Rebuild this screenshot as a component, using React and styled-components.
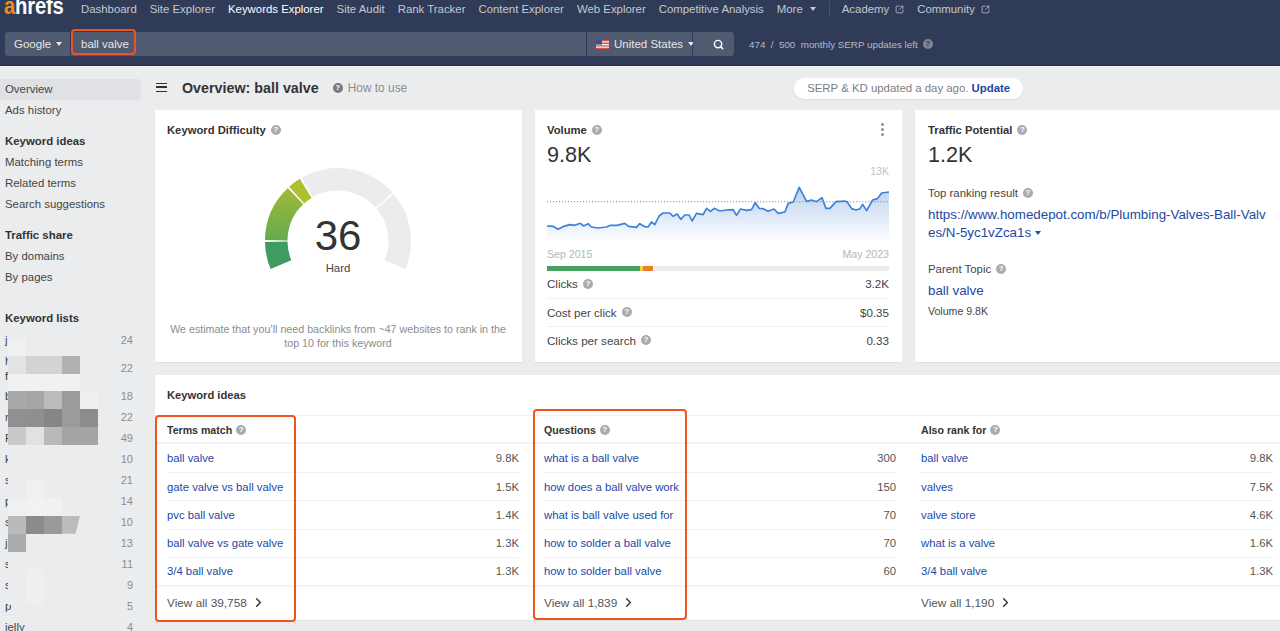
import React from "react";
import styled, { createGlobalStyle } from "styled-components";
import { Search, ChevronRight, SquareArrowOutUpRight } from "lucide-react";

const Global = createGlobalStyle`
  html, body { margin: 0; padding: 0; height: 631px; overflow: hidden; background: #ebecee; }
  * { box-sizing: border-box; }
  body { font-family: "Liberation Sans", Arial, sans-serif; font-size: 12px; color: #444; }
`;

const Page = styled.div`position: relative; width: 1280px; height: 631px; overflow: hidden;`;

const Header = styled.header`
  height: 66px; background: #303c57; border-bottom: 1px solid #1f2b46; box-shadow: 0 1px 0 #f7f7f8; position: relative;
`;
const NavRow = styled.nav`display: flex; align-items: center; height: 18px; padding-left: 4px; font-size: 11.4px; color: #c3c8d2; white-space: nowrap;`;
const Logo = styled.span`
  font-weight: 700; font-size: 23px; line-height: 18px; width: 77px; color: #fff; letter-spacing: -0.2px; position: relative; top: -3px;
  transform: scaleX(0.88); transform-origin: left center;
  b { color: #f08a24; font-weight: 700; }
`;
const NavItem = styled.a`
  color: ${p => (p.$active ? "#fff" : "#c3c8d2")}; margin-right: 13px; display: inline-flex; align-items: center; gap: 6px;
`;
const Caret = styled.i`
  display: inline-block; width: 0; height: 0; border-left: 3px solid transparent; border-right: 3px solid transparent;
  border-top: 4px solid ${p => p.$color || "currentColor"}; margin-left: ${p => p.$gap || 5}px; vertical-align: middle;
`;
const NavSep = styled.span`width: 1px; height: 16px; background: #465169; margin: 0 12px 0 0;`;
const SearchRow = styled.div`display: flex; align-items: center; height: 24px; margin-top: 14px; padding-left: 5px; color: #e4e6eb; font-size: 11.5px;`;
const Seg = styled.div`
  height: 24px; background: #505a70; display: flex; align-items: center; width: ${p => p.$w}px; margin-right: 1px;
  padding-left: ${p => p.$pl || 0}px; border-radius: ${p => p.$r || "0"}; white-space: nowrap;
`;
const Quota = styled.div`margin-left: 14px; font-size: 9.8px; color: #b4b9c4; display: flex; align-items: center; gap: 4px; white-space: pre;`;

const Help = styled.span.attrs({ children: "?" })`
  display: inline-flex; align-items: center; justify-content: center; width: 10px; height: 10px; border-radius: 50%;
  background: ${p => p.$bg || "#a9abae"}; color: ${p => p.$fg || "#fff"}; font-size: 8px; font-weight: 700; line-height: 10px; margin-left: ${p => p.$ml || 5}px; flex: none;
`;

const Body = styled.div`display: flex; height: 565px;`;

const Side = styled.aside`width: 155px; flex: none; padding-top: 13px; position: relative; color: #444; font-size: 11.4px; overflow: hidden;`;
const SideItem = styled.div`
  height: 21px; line-height: 21.5px; padding-left: 5px; width: 141px; border-radius: 0 3px 3px 0;
  background: ${p => (p.$active ? "#dfe1e5" : "transparent")}; margin-bottom: ${p => p.$mb || 0}px;
`;
const SideHead = styled.div`height: 21px; line-height: 21.5px; padding-left: 5px; font-weight: 700; color: #333; margin-top: ${p => p.$mt || 0}px;`;
const ListBody = styled.div`padding-top: 1px;`;
const ListRow = styled.div`
  display: flex; justify-content: space-between; align-items: center; width: 133px; padding-left: 5px;
  height: ${p => (p.$tall ? 35 : 21)}px; line-height: 15px;
  span:last-child { color: #8c8e92; font-size: 11px; }
`;
const Mosaic = styled.div`position: absolute; left: 8px; top: 272px; display: grid; grid-template-columns: repeat(5, 18px); grid-auto-rows: 17.8px;`;
const Cell = styled.div`
  background: ${p => p.$c || "#ebecee"};
  clip-path: ${p => (p.$skew ? "polygon(0 0, 100% 0, 75% 100%, 0 100%)" : "none")};
`;

const Main = styled.main`flex: 1; min-width: 0; overflow: hidden;`;
const TitleBar = styled.div`display: flex; align-items: center; height: 44px; padding-left: 1px;`;
const Burger = styled.span`
  width: 11px; height: 9px; border-top: 1.5px solid #333; border-bottom: 1.5px solid #333; position: relative; margin-right: 15px; margin-top: -1px;
  &::after { content: ""; position: absolute; left: 0; right: 0; top: 2.25px; height: 1.5px; background: #333; }
`;
const Title = styled.h1`margin: 0; font-size: 14.3px; font-weight: 700; color: #333;`;
const HowTo = styled.span`color: #8a8c90; font-size: 11.9px; margin-left: 5px;`;
const Pill = styled.div`
  margin-left: 387px; width: 229px; height: 21px; border-radius: 11px; background: #fff; color: #7b7d81; font-size: 11.4px;
  display: flex; align-items: center; justify-content: center; box-shadow: 0 1px 2px rgba(0,0,0,.06); white-space: pre;
  b { color: #1b46a6; }
`;

const Cards = styled.div`display: grid; grid-template-columns: repeat(3, 367px); gap: 13px; height: 252px; width: 1127px;`;
const Card = styled.section`
  background: #fff; box-shadow: 0 1px 0 #e0e1e3; padding: 9px 13px 0 ${p => p.$pl || 12}px; display: flex; flex-direction: column; min-width: 0; position: relative;
`;
const CardHead = styled.div`display: flex; align-items: center; height: 21px; font-weight: 700; font-size: 11.25px; color: #333;`;
const GaugeWrap = styled.div`position: relative; width: 160px; height: 110px; margin: 26px auto 0; text-align: center;`;
const GaugeNum = styled.div`position: absolute; left: 0; right: 0; top: 48px; font-size: 42px; line-height: 44px; color: #333;`;
const GaugeLabel = styled.div`position: absolute; left: 0; right: 0; top: 95px; font-size: 11.4px; line-height: 14px; color: #444;`;
const KdNote = styled.p`margin: auto -2px 12px; text-align: center; color: #8a8c90; font-size: 10.7px; line-height: 14px;`;
const More = styled.span`margin-left: auto; margin-right: 5px; display: flex; flex-direction: column; gap: 2px; i { width: 3px; height: 3px; border-radius: 50%; background: #8f9195; }`;
const BigValue = styled.div`font-size: 21.6px; line-height: 24px; color: #333; margin-top: 3px;`;
const ChartTop = styled.div`text-align: right; font-size: 10.6px; line-height: 12px; color: #bfc1c4; margin-top: -2px;`;
const Chart = styled.svg`display: block; width: 342px; height: 65px; margin-top: 1px;`;
const ChartAxis = styled.div`display: flex; justify-content: space-between; font-size: 10.6px; line-height: 14px; color: #b4b6b9; margin-top: 4px;`;
const Bar = styled.div`display: flex; height: 5px; background: #ebecee; margin: 5px 0 -1px;`;
const BarPart = styled.div`height: 5px; width: ${p => p.$w}px; background: ${p => p.$c};`;
const StatRow = styled.div`
  display: flex; align-items: center; justify-content: space-between; height: 28.2px; font-size: 11.6px; color: #444; padding-bottom: 1px;
  & + & { border-top: 1px solid #eff0f1; }
  > span:first-child { display: flex; align-items: center; }
`;

const Sub = styled.div`font-size: 11.4px; color: #444; display: flex; align-items: center; height: 14px; margin-top: ${p => p.$mt}px;`;
const BlueLink = styled.a`
  color: #23499f; font-size: 13.35px; line-height: 18px; word-break: break-all; display: block; margin-top: ${p => p.$mt}px;
`;
const Tiny = styled.div`font-size: 10.6px; color: #444; margin-top: 4px; line-height: 14px;`;

const Ideas = styled.section`background: #fff; margin-top: 13px; height: 245px; width: 1127px; box-shadow: 0 1px 0 #e0e1e3;`;
const IdeasHead = styled.div`height: 41px; line-height: 40px; padding-left: 12px; font-weight: 700; font-size: 11.2px; color: #333; border-bottom: 1px solid #eff0f1;`;
const Cols = styled.div`display: grid; grid-template-columns: repeat(3, 377px);`;
const Col = styled.div`display: flex; flex-direction: column;`;
const ColHead = styled.div`display: flex; align-items: center; height: 28px; padding: 1px 0 0 12px; font-weight: 700; font-size: 10.6px; color: #333; border-bottom: 2px solid #f2f3f4;`;
const IdeaList = styled.div`padding: 0 13px 0 12px;`;
const IdeaRow = styled.div`
  display: flex; justify-content: space-between; align-items: center; height: 28.2px; font-size: 11.3px; color: #555;
  & + & { border-top: 1px solid #eff0f1; }
  a { color: #2149a8; }
`;
const ViewAll = styled.div`
  display: flex; align-items: center; height: 34px; padding-left: 12px; font-size: 11.8px; color: #555; border-top: 2px solid #f2f3f4; gap: 4px;
`;

const Mark = styled.div`
  position: absolute; left: ${p => p.$x}px; top: ${p => p.$y}px; width: ${p => p.$w}px; height: ${p => p.$h}px;
  border: 2px solid #ee5320; border-radius: 4px; pointer-events: none;
`;

const polar = (r, a) => {
  const t = (a * Math.PI) / 180;
  return [-r * Math.cos(t), -r * Math.sin(t)];
};
const arc = (a0, a1, R = 73, r = 50.5) => {
  const [x0, y0] = polar(R, a0), [x1, y1] = polar(R, a1), [x2, y2] = polar(r, a1), [x3, y3] = polar(r, a0);
  const large = a1 - a0 > 180 ? 1 : 0;
  return `M${x0} ${y0}A${R} ${R} 0 ${large} 1 ${x1} ${y1}L${x2} ${y2}A${r} ${r} 0 ${large} 0 ${x3} ${y3}Z`;
};

const Gauge = () => (
  <svg width="160" height="110" viewBox="-80 -75 160 110">
    <defs>
      <linearGradient id="g2" x1="0" y1="0" x2="0" y2="1">
        <stop offset="0" stopColor="#a1ba38" />
        <stop offset="1" stopColor="#64aa4e" />
      </linearGradient>
    </defs>
    <path d={arc(-22.5, -0.7)} fill="#3f9c5f" />
    <path d={arc(0.7, 46.5)} fill="url(#g2)" />
    <path d={arc(48, 58.5)} fill="#b0bf30" />
    <path d={arc(60, 138.5)} fill="#ebecee" />
    <path d={arc(139.8, 202.5)} fill="#ebecee" />
  </svg>
);

const linePts = [[52,348],[70,349],[85,358],[100,350],[120,344],[135,346],[152,340],[162,348],[175,341],[185,351],[205,354],[230,351],[242,346],[262,346],[285,340],[297,349],[320,352],[330,341],[345,350],[355,351],[365,336],[375,344],[388,318],[400,309],[420,309],[430,319],[442,312],[453,328],[465,315],[478,315],[487,333],[500,310],[520,314],[530,295],[542,304],[553,295],[570,303],[590,300],[610,299],[620,316],[632,297],[650,301],[665,299],[676,278],[688,295],[700,296],[715,304],[732,297],[745,310],[765,306],[775,280],[790,276],[808,232],[830,274],[845,270],[860,275],[876,263],[888,295],[900,295],[918,275],[945,273],[952,276],[965,296],[978,300],[990,296],[998,283],[1010,302],[1028,270],[1042,266],[1055,249],[1077,246]];
const lineD = linePts.map(p => p.join(" ")).join(" L");

const VolumeChart = () => (
  <Chart viewBox="52 204 1025 195" preserveAspectRatio="none">
    <defs>
      <linearGradient id="area" x1="0" y1="0" x2="0" y2="1">
        <stop offset="0" stopColor="#bcd2ee" />
        <stop offset="1" stopColor="#ffffff" />
      </linearGradient>
    </defs>
    <path d={`M${lineD} L1077 399 L52 399 Z`} fill="url(#area)" />
    <line x1="52" x2="1077" y1="275" y2="275" stroke="#777" strokeWidth="3" strokeDasharray="3 6" />
    <path d={`M${lineD}`} fill="none" stroke="#3f80d9" strokeWidth="5" strokeLinejoin="round" />
  </Chart>
);

const FlagIcon = styled.svg`margin-right: 5px; flex: none;`;
const Flag = () => (
  <FlagIcon width="13" height="9" viewBox="0 0 13 9">
    <rect width="13" height="9" fill="#f4f4f4" />
    <path d="M0 0h13v1.3H0zM0 2.6h13v1.3H0zM0 5.2h13v1.3H0zM0 7.8h13V9H0z" fill="#d2544f" />
    <rect width="6" height="4.6" fill="#3d4f8c" />
  </FlagIcon>
);

const mosaic = [
  ["#eff0f1"],
  ["#e2e3e4", "#d2d3d5", "#d2d3d5", "#b0b1b3"],
  ["#eff0f1", "#f0f1f2", "#f0f1f2", "#f0f1f2"],
  ["#a8a9ab", "#a5a6a8", "#bbbcbe", "#9a9b9d", "#eeeff0"],
  ["#8f9092", "#8e8f91", "#858688", "#9a9b9d", "#8b8c8e"],
  ["#c8c9cb", "#e0e1e2", "#b8b9bb", "#a3a4a6", "#a3a4a6"],
  [],
  [],
  [null, "#eff0f1"],
  ["#eff0f1", "#f1f2f3", "#f0f1f2", "#ecedee"],
  ["#b9babc", "#8a8b8d", "#999a9c", "#bbbcbe"],
  ["#aaabad"],
  [],
  [null, "#eeeff0"],
  [null, "#eeeff0"],
];

const lists = [["j", 24], ["h|f", 22], ["b", 18], ["n", 22], ["F", 49], ["k", 10], ["s", 21], ["p", 14], ["s", 10], ["j", 13], ["s", 11], ["s", 9], ["p", 5], ["jelly", 4]];
const nav = ["Dashboard", "Site Explorer", "Keywords Explorer", "Site Audit", "Rank Tracker", "Content Explorer", "Web Explorer", "Competitive Analysis"];

const columns = [
  { head: "Terms match", all: "View all 39,758", rows: [["ball valve", "9.8K"], ["gate valve vs ball valve", "1.5K"], ["pvc ball valve", "1.4K"], ["ball valve vs gate valve", "1.3K"], ["3/4 ball valve", "1.3K"]] },
  { head: "Questions", all: "View all 1,839", rows: [["what is a ball valve", "300"], ["how does a ball valve work", "150"], ["what is ball valve used for", "70"], ["how to solder a ball valve", "70"], ["how to solder ball valve", "60"]] },
  { head: "Also rank for", all: "View all 1,190", rows: [["ball valve", "9.8K"], ["valves", "7.5K"], ["valve store", "4.6K"], ["what is a valve", "1.6K"], ["3/4 ball valve", "1.3K"]] },
];

export default function App() {
  return (
    <Page>
      <Global />
      <Header>
        <NavRow>
          <Logo><b>a</b>hrefs</Logo>
          {nav.map(n => <NavItem key={n} $active={n === "Keywords Explorer"}>{n}</NavItem>)}
          <NavItem>More<Caret $gap={1} /></NavItem>
          <NavSep />
          <NavItem>Academy<SquareArrowOutUpRight size={9} /></NavItem>
          <NavItem>Community<SquareArrowOutUpRight size={9} /></NavItem>
        </NavRow>
        <SearchRow>
          <Seg $w={65} $pl={9} $r="3px 0 0 3px">Google<Caret $color="#e4e6eb" /></Seg>
          <Seg $w={515} $pl={10}>ball valve</Seg>
          <Seg $w={105} $pl={9}><Flag />United States<Caret $color="#e4e6eb" /></Seg>
          <Seg $w={41} $pl={20} $r="0 3px 3px 0"><Search size={11} strokeWidth={3.2} color="#fff" /></Seg>
          <Quota>474  /  500  monthly SERP updates left<Help $bg="#7d8595" $fg="#303c57" $ml={1} /></Quota>
        </SearchRow>
      </Header>
      <Body>
        <Side>
          <SideItem $active>Overview</SideItem>
          <SideItem $mb={10}>Ads history</SideItem>
          <SideHead>Keyword ideas</SideHead>
          <SideItem>Matching terms</SideItem>
          <SideItem>Related terms</SideItem>
          <SideItem $mb={10}>Search suggestions</SideItem>
          <SideHead>Traffic share</SideHead>
          <SideItem>By domains</SideItem>
          <SideItem>By pages</SideItem>
          <SideHead $mt={20}>Keyword lists</SideHead>
          <ListBody>
            {lists.map(([name, n], i) => {
              const lines = name.split("|");
              return (
                <ListRow key={i} $tall={lines.length > 1}>
                  <span>{lines.map((l, k) => <div key={k}>{l}</div>)}</span>
                  <span>{n}</span>
                </ListRow>
              );
            })}
          </ListBody>
          <Mosaic>
            {mosaic.flatMap((row, r) => Array.from({ length: 5 }, (_, c) => <Cell key={`${r}-${c}`} $c={row[c]} $skew={r === 10 && c === 3} />))}
          </Mosaic>
        </Side>
        <Main>
          <TitleBar>
            <Burger />
            <Title>Overview: ball valve</Title>
            <Help $bg="#77797d" $ml={14} />
            <HowTo>How to use</HowTo>
            <Pill>SERP &amp; KD updated a day ago. <b>Update</b></Pill>
          </TitleBar>
          <Cards>
            <Card>
              <CardHead>Keyword Difficulty<Help /></CardHead>
              <GaugeWrap>
                <Gauge />
                <GaugeNum>36</GaugeNum>
                <GaugeLabel>Hard</GaugeLabel>
              </GaugeWrap>
              <KdNote>We estimate that you’ll need backlinks from ~47 websites to rank in the top 10 for this keyword</KdNote>
            </Card>
            <Card>
              <CardHead>Volume<Help /><More><i /><i /><i /></More></CardHead>
              <BigValue>9.8K</BigValue>
              <ChartTop>13K</ChartTop>
              <VolumeChart />
              <ChartAxis><span>Sep 2015</span><span>May 2023</span></ChartAxis>
              <Bar>
                <BarPart $w={93} $c="#45a061" />
                <BarPart $w={3} $c="#f0d24a" />
                <BarPart $w={10} $c="#ed7d26" />
              </Bar>
              <StatRow><span>Clicks<Help /></span><span>3.2K</span></StatRow>
              <StatRow><span>Cost per click<Help /></span><span>$0.35</span></StatRow>
              <StatRow><span>Clicks per search<Help /></span><span>0.33</span></StatRow>
            </Card>
            <Card $pl={13}>
              <CardHead>Traffic Potential<Help /></CardHead>
              <BigValue>1.2K</BigValue>
              <Sub $mt={19}>Top ranking result<Help /></Sub>
              <BlueLink $mt={6}>https://www.homedepot.com/b/Plumbing-Valves-Ball-Valves/N-5yc1vZca1s<Caret $color="#23499f" $gap={4} /></BlueLink>
              <Sub $mt={20}>Parent Topic<Help /></Sub>
              <BlueLink $mt={6}>ball valve</BlueLink>
              <Tiny>Volume 9.8K</Tiny>
            </Card>
          </Cards>
          <Ideas>
            <IdeasHead>Keyword ideas</IdeasHead>
            <Cols>
              {columns.map(col => (
                <Col key={col.head}>
                  <ColHead>{col.head}<Help $ml={4} /></ColHead>
                  <IdeaList>
                    {col.rows.map(([k, v]) => (
                      <IdeaRow key={k}><a>{k}</a><span>{v}</span></IdeaRow>
                    ))}
                  </IdeaList>
                  <ViewAll>{col.all}<ChevronRight size={15} color="#333" strokeWidth={2.2} /></ViewAll>
                </Col>
              ))}
            </Cols>
          </Ideas>
        </Main>
      </Body>
      <Mark $x={71} $y={29} $w={65} $h={26} />
      <Mark $x={155} $y={415} $w={141} $h={207} />
      <Mark $x={533} $y={409} $w={154} $h={211} />
    </Page>
  );
}
